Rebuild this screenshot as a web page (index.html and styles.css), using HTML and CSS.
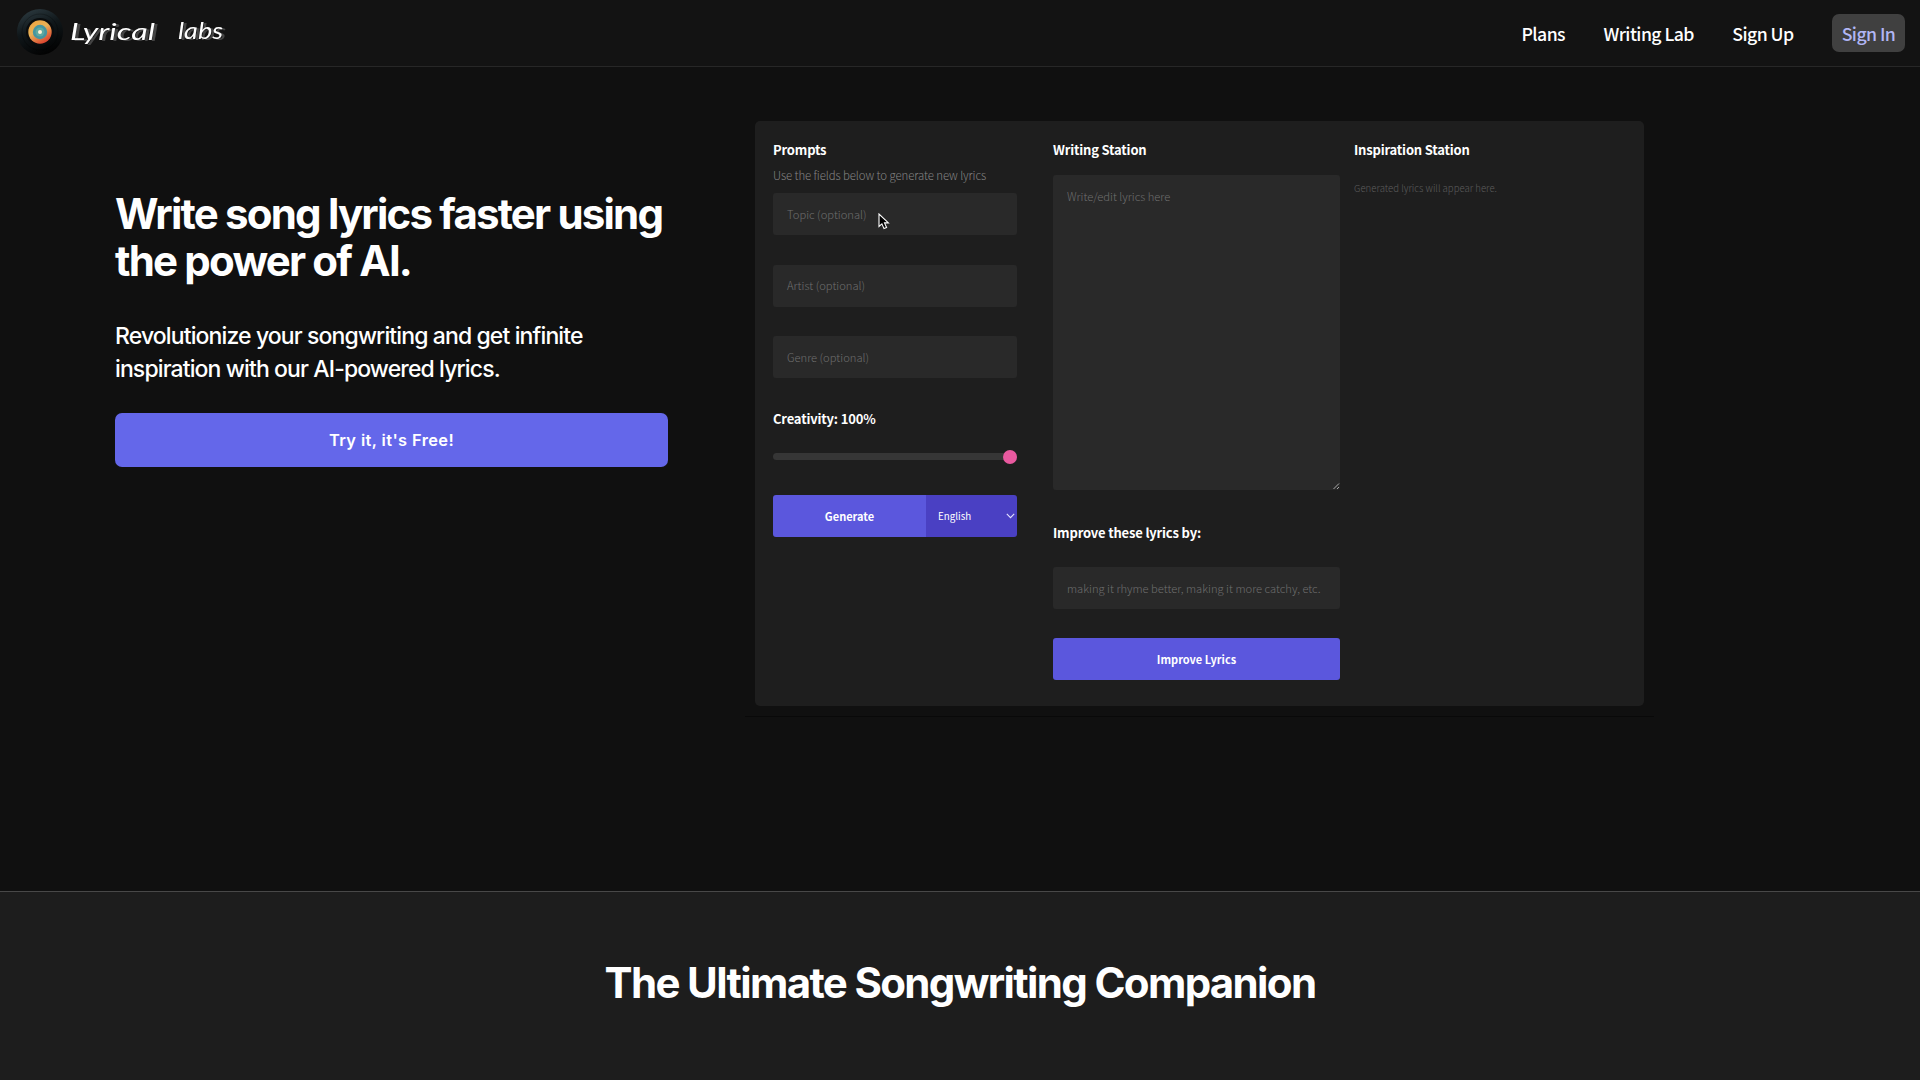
FILE: index.html
```html
<!doctype html>
<html lang="en">
	<head>
		<meta charset="utf-8" />
		<title>Lyrical Labs</title>
		<link rel="stylesheet" href="styles.css">
	</head>
	<body>
		<header class="navbar">
			<a class="brand">
				<svg class="brand_disc" width="48" height="48" viewBox="0 0 48 48">
					<defs>
						<linearGradient id="vinyl" x1="0.2" y1="0" x2="0.6" y2="1">
							<stop offset="0" stop-color="#2c3a40" />
							<stop offset="0.45" stop-color="#10171a" />
							<stop offset="1" stop-color="#020202" />
						</linearGradient>
						<linearGradient id="label" x1="0" y1="0" x2="0.6" y2="1">
							<stop offset="0" stop-color="#efa13c" />
							<stop offset="0.5" stop-color="#e8b257" />
							<stop offset="1" stop-color="#dc4630" />
						</linearGradient>
					</defs>
					<circle cx="24" cy="24" r="23" fill="url(#vinyl)" />
					<circle cx="24" cy="24" r="18" fill="none" stroke="#000" stroke-opacity="0.25" />
					<circle cx="24" cy="24" r="14" fill="#0a0c0d" />
					<circle cx="24" cy="24" r="11.7" fill="url(#label)" />
					<circle cx="24" cy="24" r="7.2" fill="#4595a0" />
					<circle cx="24" cy="24" r="4.5" fill="#5fa9a0" />
					<circle cx="24" cy="24" r="2" fill="#fff3d6" />
				</svg>
				<svg class="brand_name" width="160" height="44" viewBox="0 0 160 44">
					<text x="1" y="30" textLength="85" lengthAdjust="spacingAndGlyphs">Lyrical</text>
					<text x="109" y="29" textLength="45" lengthAdjust="spacingAndGlyphs">labs</text>
				</svg>
			</a>
			<nav class="menu">
				<a>Plans</a>
				<a>Writing Lab</a>
				<a>Sign Up</a>
				<a class="sign_in">Sign In</a>
			</nav>
		</header>
		<main class="hero">
			<section class="pitch">
				<h1>Write song lyrics faster using<br/>the power of AI.</h1>
				<p>Revolutionize your songwriting and get infinite<br/>inspiration with our AI-powered lyrics.</p>
				<a class="try_button">Try it, it's Free!</a>
			</section>
			<section class="demo">
				<div class="panel">
					<div class="column prompts">
						<h3>Prompts</h3>
						<p class="hint">Use the fields below to generate new lyrics</p>
						<div class="field">Topic (optional)</div>
						<div class="field">Artist (optional)</div>
						<div class="field">Genre (optional)</div>
						<h3>Creativity: 100%</h3>
						<div class="slider"><span class="thumb"></span></div>
						<div class="generate">
							<span class="generate_button">Generate</span>
							<span class="language">
								English
								<svg width="9" height="6" viewBox="0 0 9 6"><path d="M0.8 0.8 L4.5 4.6 L8.2 0.8" fill="none" stroke="#e4e2ff" stroke-width="1.1" /></svg>
							</span>
						</div>
						<svg class="cursor" width="12" height="17" viewBox="0 0 12 17"><path d="M1 1 V13.4 L3.9 10.8 L6 15.6 L8.6 14.5 L6.5 9.9 H10.4 Z" fill="#000" stroke="#fff" stroke-width="1.1" /></svg>
					</div>
					<div class="column writing">
						<h3>Writing Station</h3>
						<div class="lyrics">
							Write/edit lyrics here
							<svg class="grip" width="8" height="8" viewBox="0 0 8 8"><path d="M1.5 7 L7 1.5 M5 7 L7 5" stroke="#aaa" stroke-width="1" /></svg>
						</div>
						<h3 class="improve">Improve these lyrics by:</h3>
						<div class="field">making it rhyme better, making it more catchy, etc.</div>
						<div class="improve_button">Improve Lyrics</div>
					</div>
					<div class="column inspiration">
						<h3>Inspiration Station</h3>
						<p class="empty">Generated lyrics will appear here.</p>
					</div>
				</div>
			</section>
		</main>
		<section class="companion">
			<h2>The Ultimate Songwriting Companion</h2>
		</section>
	</body>
</html>
```
FILE: styles.css
```css
* {
	box-sizing : border-box;
}
body {
	margin : 0;
	height : 1080px;
	overflow : hidden;
	display : flex;
	flex-direction : column;
	background-color : #101010;
	color : #fff;
	font-family : "Noto Sans CJK SC", "Noto Sans", sans-serif;
}
h1, h2, h3, p {
	margin : 0;
}
.navbar {
	display : flex;
	justify-content : space-between;
	align-items : center;
	height : 67px;
	padding : 0 15px 0 16px;
	background-color : #131313;
	border-bottom : 1px solid #272727;
}
.brand {
	display : flex;
	align-items : center;
	gap : 5px;
	margin-top : -2px;
}
.brand_name {
	filter : drop-shadow(3px 1px 0 #444);
}
.brand_name text {
	font-family : Lato, sans-serif;
	font-size : 23px;
	font-style : italic;
	fill : #fff;
}
.menu {
	display : flex;
	align-items : center;
	gap : 38.4px;
	font-size : 17.7px;
	font-weight : 500;
	letter-spacing : -0.56px;
}
.sign_in {
	display : flex;
	align-items : center;
	justify-content : center;
	width : 73px;
	height : 38px;
	border-radius : 7px;
	background-color : #404040;
	color : #b1b6f5;
}
.hero {
	display : flex;
	height : 824px;
	padding-left : 115px;
}
.pitch {
	width : 553px;
	padding-top : 123px;
	font-family : Inter, sans-serif;
}
.pitch h1 {
	font-size : 42px;
	line-height : 47px;
	font-weight : 700;
	letter-spacing : -1.81px;
	white-space : nowrap;
}
.pitch p {
	margin-top : 36px;
	font-size : 23px;
	line-height : 33px;
	font-weight : 450;
	letter-spacing : -0.88px;
	white-space : nowrap;
}
.try_button {
	display : flex;
	align-items : center;
	justify-content : center;
	height : 54px;
	margin-top : 27px;
	border-radius : 7px;
	background-color : #6467ea;
	font-size : 16.4px;
	font-weight : 600;
	letter-spacing : 0.4px;
}
.demo {
	width : 909px;
	height : 650px;
	margin-left : 77px;
	padding : 54px 10px 0;
	border-bottom : 1px solid #090909;
}
.panel {
	display : flex;
	height : 585px;
	padding : 0 18px;
	border-radius : 5px;
	background-color : #1e1e1e;
}
.column {
	display : flex;
	flex-direction : column;
	padding-top : 18px;
}
.column h3 {
	height : 20px;
	font-size : 13px;
	line-height : 22px;
	font-weight : 700;
	letter-spacing : -0.18px;
}
.prompts {
	position : relative;
	width : 244px;
}
.hint {
	height : 24px;
	margin-top : 6px;
	margin-bottom : 4px;
	font-size : 11.4px;
	line-height : 20px;
	color : #858585;
	font-weight : 300;
	letter-spacing : -0.08px;
}
.field {
	display : flex;
	align-items : center;
	height : 42px;
	padding-left : 14px;
	border-radius : 3px;
	background-color : #292929;
	color : #6e6e6e;
	font-size : 11.2px;
	font-weight : 300;
	white-space : nowrap;
}
.prompts .field {
	margin-bottom : 29.6px;
	padding-bottom : 1px;
}
.slider {
	position : relative;
	height : 7px;
	margin-top : 25.2px;
	border-radius : 4px;
	background-color : #363636;
}
.thumb {
	position : absolute;
	right : 0;
	top : -3.2px;
	width : 14px;
	height : 14px;
	border-radius : 50%;
	background-color : #e9599f;
}
.generate {
	display : flex;
	height : 42px;
	margin-top : 35px;
	border-radius : 3px;
	overflow : hidden;
}
.generate_button {
	display : flex;
	align-items : center;
	justify-content : center;
	width : 153px;
	background-color : #5b57dd;
	font-size : 11px;
	font-weight : 700;
}
.language {
	flex : 1;
	display : flex;
	align-items : center;
	justify-content : space-between;
	padding : 0 2px 0 12px;
	background-color : #4a40c3;
	font-size : 9.8px;
}
.cursor {
	position : absolute;
	left : 105px;
	top : 92px;
}
.writing {
	width : 287px;
	margin-left : 36px;
}
.lyrics {
	position : relative;
	height : 315px;
	margin-top : 16px;
	padding : 12px 14px;
	border-radius : 3px;
	background-color : #292929;
	color : #6e6e6e;
	font-size : 11.2px;
	line-height : 18px;
	font-weight : 300;
}
.grip {
	position : absolute;
	right : 0;
	bottom : 0;
}
.writing .improve {
	margin-top : 31.6px;
	margin-bottom : 25px;
}
.improve_button {
	display : flex;
	align-items : center;
	justify-content : center;
	height : 42px;
	margin-top : 29.8px;
	border-radius : 3px;
	background-color : #5b57dd;
	font-size : 11px;
	font-weight : 700;
}
.inspiration {
	margin-left : 14px;
}
.empty {
	margin-top : 19px;
	color : #5c5c5c;
	font-size : 9.6px;
	line-height : 20px;
	font-weight : 300;
}
.companion {
	flex : 1;
	padding-top : 66px;
	border-top : 1px solid #484848;
	background-color : #1d1d1d;
	text-align : center;
}
.companion h2 {
	font-family : Inter, sans-serif;
	font-size : 42px;
	line-height : 50px;
	font-weight : 700;
	letter-spacing : -1.65px;
}
```
